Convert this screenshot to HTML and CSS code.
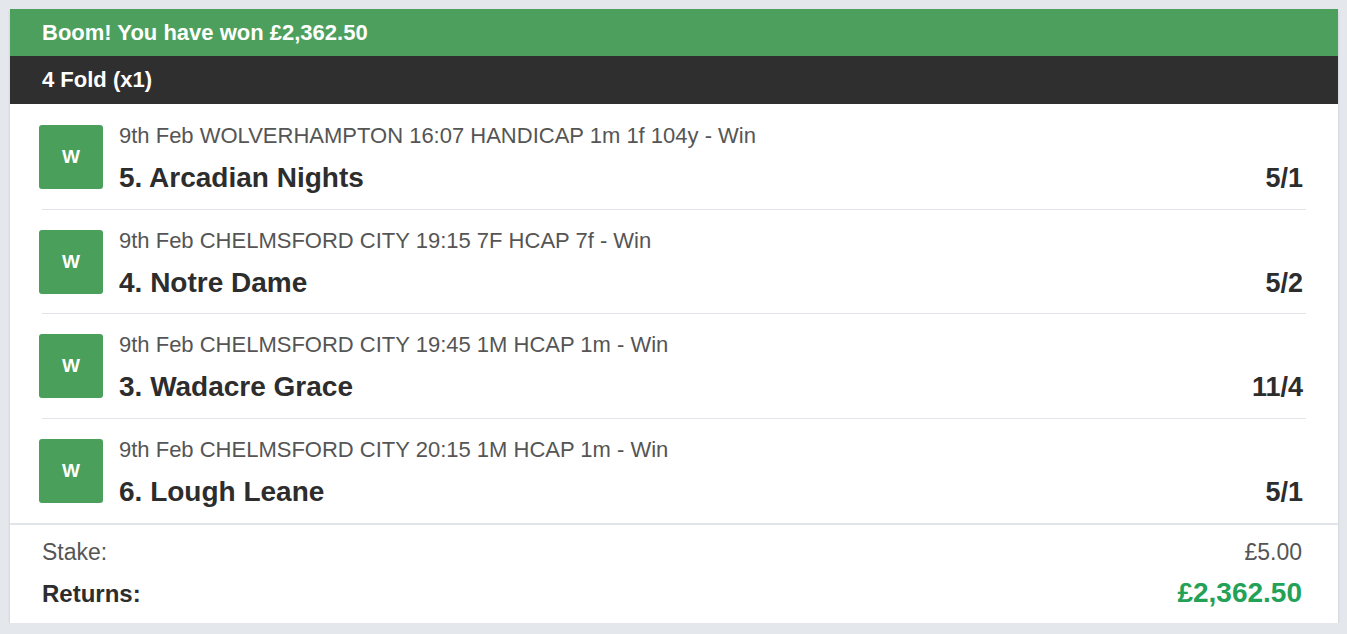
FILE: index.html
```html
<!DOCTYPE html>
<html lang="en">
  <head>
    <meta charset="UTF-8" />
    <meta name="viewport" content="width=device-width, initial-scale=1.0" />
    <title>Bet receipt</title>
    <link rel="stylesheet" href="styles.css">
  </head>
  <body>
    <div class="slip">
      <div class="win-banner">Boom! You have won £2,362.50</div>
      <div class="bet-type">4 Fold (x1)</div>
      <ul class="legs">
        <li class="leg">
          <span class="result">W</span>
          <div class="leg-info">
            <p class="race">9th Feb WOLVERHAMPTON 16:07 HANDICAP 1m 1f 104y - Win</p>
            <div class="leg-line">
              <span class="runner">5. Arcadian Nights</span>
              <span class="odds">5/1</span>
            </div>
          </div>
        </li>
        <li class="leg">
          <span class="result">W</span>
          <div class="leg-info">
            <p class="race">9th Feb CHELMSFORD CITY 19:15 7F HCAP 7f - Win</p>
            <div class="leg-line">
              <span class="runner">4. Notre Dame</span>
              <span class="odds">5/2</span>
            </div>
          </div>
        </li>
        <li class="leg">
          <span class="result">W</span>
          <div class="leg-info">
            <p class="race">9th Feb CHELMSFORD CITY 19:45 1M HCAP 1m - Win</p>
            <div class="leg-line">
              <span class="runner">3. Wadacre Grace</span>
              <span class="odds">11/4</span>
            </div>
          </div>
        </li>
        <li class="leg">
          <span class="result">W</span>
          <div class="leg-info">
            <p class="race">9th Feb CHELMSFORD CITY 20:15 1M HCAP 1m - Win</p>
            <div class="leg-line">
              <span class="runner">6. Lough Leane</span>
              <span class="odds">5/1</span>
            </div>
          </div>
        </li>
      </ul>
      <div class="totals">
        <div class="total-row">
          <span>Stake:</span>
          <span>£5.00</span>
        </div>
        <div class="total-row returns">
          <span>Returns:</span>
          <span class="payout">£2,362.50</span>
        </div>
      </div>
    </div>
  </body>
</html>
```

FILE: styles.css
```css
body {
  margin: 0;
  padding: 9px 9px 0 10px;
  background-color: #e4e7eb;
  font-family: "Liberation Sans", Arial, sans-serif;
  color: #333;
}

.slip {
  background-color: #fff;
  box-shadow: 0 2px 3px rgba(0, 0, 0, 0.12);
}

.win-banner {
  height: 47px;
  display: flex;
  align-items: center;
  padding: 0 32px;
  background-color: #4d9f5d;
  color: #fff;
  font-size: 22px;
  font-weight: bold;
}

.bet-type {
  height: 48px;
  display: flex;
  align-items: center;
  padding: 0 32px;
  background-color: #2f2f2f;
  color: #fff;
  font-size: 22px;
  font-weight: bold;
}

.legs {
  list-style: none;
  margin: 0;
  padding: 0 32px;
}

.leg {
  display: flex;
  align-items: flex-start;
  gap: 16px;
  padding: 20px 0 19.5px;
  border-bottom: 1px solid #e1e5e9;
}
.leg:first-child {
  padding-top: 21px;
}
.leg:last-child {
  padding-bottom: 20px;
  border-bottom: none;
}

.result {
  flex: none;
  width: 64px;
  height: 64px;
  margin-left: -3px;
  display: flex;
  align-items: center;
  justify-content: center;
  background-color: #4a9f5b;
  border-radius: 3px;
  color: #fff;
  font-size: 19px;
  font-weight: bold;
}

.leg-info {
  flex: 1;
  display: flex;
  flex-direction: column;
  gap: 21px;
  padding-top: 1px;
}

.race {
  margin: 0;
  font-size: 22px;
  line-height: 20px;
  color: #555;
}

.leg-line {
  display: flex;
  justify-content: space-between;
  align-items: baseline;
  padding-right: 3px;
  font-size: 28px;
  line-height: 22px;
  font-weight: bold;
  color: #2d2d2d;
}

.odds {
  font-size: 27px;
}

.totals {
  border-top: 2px solid #e1e5e9;
  padding: 13px 36px 15px 32px;
}

.total-row {
  display: flex;
  justify-content: space-between;
  align-items: baseline;
  font-size: 23px;
  line-height: 28px;
  color: #555;
}

.returns {
  margin-top: 13px;
  font-size: 24px;
  font-weight: bold;
  color: #2d2d2d;
}

.payout {
  font-size: 28px;
  color: #22a157;
}
```
